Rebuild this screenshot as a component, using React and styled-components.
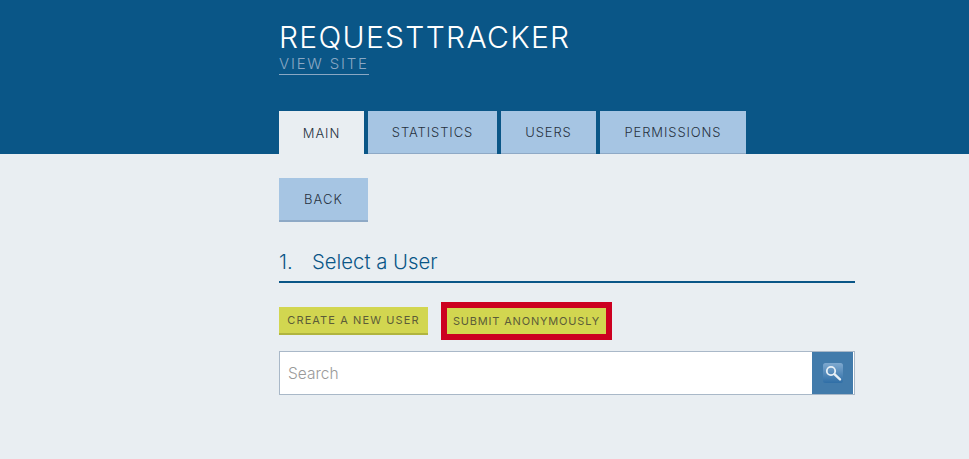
import React from 'react'
import styled, { createGlobalStyle } from 'styled-components'

const Global = createGlobalStyle`
  html, body {
    margin: 0;
    padding: 0;
    background: #e9eef2;
    font-family: "Inter", "Open Sans", sans-serif;
  }
`

const App = () => {
  return (
    <Page>
      <Global />
      <Header>
        <Inner>
          <Title>REQUESTTRACKER</Title>
          <ViewSite href="#">VIEW SITE</ViewSite>
          <Tabs>
            <Tab $active $width={85}>MAIN</Tab>
            <Tab $width={129}>STATISTICS</Tab>
            <Tab $width={95}>USERS</Tab>
            <Tab $width={146}>PERMISSIONS</Tab>
          </Tabs>
        </Inner>
      </Header>

      <Inner>
        <BackButton>BACK</BackButton>

        <Heading>
          <Num>1.</Num>
          Select a User
        </Heading>

        <Actions>
          <GreenButton $width={149}>CREATE A NEW USER</GreenButton>
          <Highlight>
            <GreenButton $width={159} $flat>SUBMIT ANONYMOUSLY</GreenButton>
          </Highlight>
        </Actions>

        <SearchBox>
          <SearchInput placeholder="Search" />
          <SearchButton aria-label="Search">
            <MagnifierIcon />
          </SearchButton>
        </SearchBox>
      </Inner>
    </Page>
  )
}

const MagnifierIcon = () => (
  <svg width="20" height="20" viewBox="0 0 20 20">
    <defs>
      <linearGradient id="tile" x1="0" y1="0" x2="0" y2="1">
        <stop offset="0" stopColor="#7fa9cf" />
        <stop offset="1" stopColor="#2f6ea6" />
      </linearGradient>
    </defs>
    <rect x="0" y="0" width="20" height="20" rx="2.5" fill="url(#tile)" />
    <circle cx="8" cy="8" r="4.2" fill="none" stroke="#e8f0f6" strokeWidth="1.8" />
    <path d="M11.4 11.2 L17 16.4" stroke="#e8f0f6" strokeWidth="2.4" strokeLinecap="round" />
  </svg>
)

export default App

const Page = styled.div`
  min-height: 459px;
  background: #e9eef2;
`

const Header = styled.header`
  background: #0a5687;
  height: 154px;
`

const Inner = styled.div`
  width: 576px;
  margin-left: 279px;
  display: flex;
  flex-direction: column;
  align-items: flex-start;
`

const Title = styled.h1`
  margin: 20px 0 0 0;
  font-size: 30px;
  line-height: 35px;
  font-weight: 300;
  letter-spacing: 1.3px;
  color: #ffffff;
`

const ViewSite = styled.a`
  font-size: 15px;
  line-height: 18px;
  font-weight: 300;
  letter-spacing: 1.8px;
  color: #8aa8c4;
  text-decoration: none;
  padding-bottom: 1px;
  border-bottom: 1px solid #8aa8c4;
`

const Tabs = styled.nav`
  display: flex;
  gap: 4px;
  margin-top: 36px;
`

const Tab = styled.div`
  width: ${p => p.$width}px;
  height: 43px;
  box-sizing: border-box;
  display: flex;
  align-items: center;
  justify-content: center;
  font-size: 13px;
  font-weight: 300;
  letter-spacing: 0.9px;
  color: #26323f;
  background: ${p => (p.$active ? '#e9eef2' : '#a6c5e3')};
  border-bottom: ${p => (p.$active ? 'none' : '1px solid #8ea9c6')};
`

const BackButton = styled.div`
  width: 89px;
  height: 44px;
  margin-top: 24px;
  box-sizing: border-box;
  display: flex;
  align-items: center;
  justify-content: center;
  font-size: 13px;
  font-weight: 300;
  letter-spacing: 1.1px;
  color: #26323f;
  background: #a6c5e3;
  border-bottom: 2px solid #8ea9c6;
`

const Heading = styled.h2`
  width: 100%;
  margin: 24px 0 0 0;
  box-sizing: border-box;
  height: 37px;
  display: flex;
  align-items: center;
  font-size: 20.3px;
  font-weight: 300;
  color: #0a5687;
  border-bottom: 2px solid #0a5687;
  padding-bottom: 4px;
`

const Num = styled.span`
  width: 33px;
`

const Actions = styled.div`
  display: flex;
  align-items: center;
  gap: 13px;
  margin-top: 19px;
`

const GreenButton = styled.div`
  width: ${p => p.$width}px;
  height: ${p => (p.$flat ? 26 : 28)}px;
  box-sizing: border-box;
  display: flex;
  align-items: center;
  justify-content: center;
  font-size: 11px;
  font-weight: 400;
  letter-spacing: ${p => (p.$flat ? 0.82 : 1.1)}px;
  color: #5c5c38;
  background: #d2d650;
  border-bottom: ${p => (p.$flat ? 'none' : '2px solid #b0b43f')};
`

const Highlight = styled.div`
  border: 6px solid #cc0020;
`

const SearchBox = styled.div`
  width: 100%;
  height: 44px;
  margin-top: 11px;
  box-sizing: border-box;
  display: flex;
  background: #ffffff;
  border: 1px solid #a9b8c8;
  padding-right: 1px;
`

const SearchInput = styled.input`
  flex: 1;
  min-width: 0;
  border: none;
  outline: none;
  background: transparent;
  padding: 0 8px;
  font-family: inherit;
  font-weight: 300;
  font-size: 15.5px;
  &::placeholder {
    color: #9a9a9a;
    opacity: 1;
  }
`

const SearchButton = styled.button`
  width: 41px;
  border: none;
  padding: 0;
  background: #427bab;
  display: flex;
  align-items: center;
  justify-content: center;
`
